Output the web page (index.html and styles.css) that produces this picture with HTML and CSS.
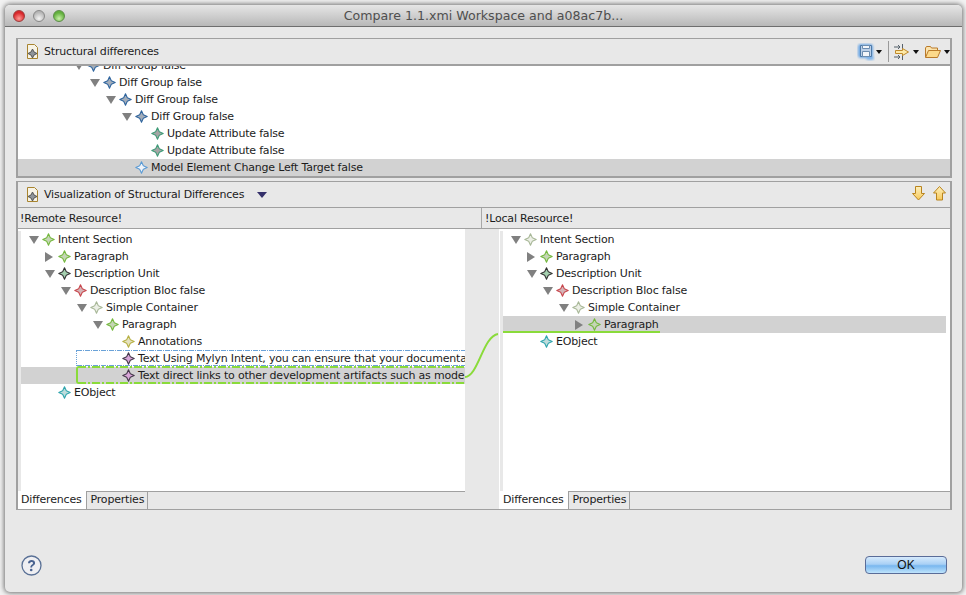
FILE: index.html
```html
<!DOCTYPE html>
<html lang="en">
<head>
<meta charset="utf-8">
<title>Compare</title>
<link rel="stylesheet" href="styles.css">
</head>
<body>
<svg class="defs" width="0" height="0">
  <defs>
    <filter id="glow" x="-20%" y="-20%" width="140%" height="140%"><feGaussianBlur stdDeviation="0.8"/></filter>
    <linearGradient id="ga" x1="0" y1="0" x2="0" y2="1"><stop offset="0" stop-color="#fdf0bd"/><stop offset="1" stop-color="#f7c95a"/></linearGradient>
  </defs>
  <symbol id="star" viewBox="0 0 13 13">
    <path d="M6.500 .8 8.300 4.700 12.200 6.500 8.300 8.300 6.500 12.200 4.700 8.300 .8 6.500 4.700 4.700z" fill="var(--c)" stroke="currentColor" stroke-width="1.100" stroke-linejoin="round"/>
    <path d="M6.500 4 9 6.500 6.500 9 4 6.500z" fill="var(--c)"/>
  </symbol>
  <symbol id="doc" viewBox="0 0 13 16">
    <path d="M1.500 .5h7l3 3v11h-10z" fill="#f7f3e6" stroke="#a8842f"/>
    <path d="M6.500 5 8 8l3 1.500L8 11l-1.500 3L5 11 2 9.500 5 8z" fill="#8f9499" stroke="#555"/>
  </symbol>
</svg>
<div class="window">
  <header class="titlebar">
    <div class="lights"><i class="light l-red"></i><i class="light l-grey"></i><i class="light l-green"></i></div>
    <div class="title">Compare 1.1.xmi Workspace and a08ac7b...</div>
  </header>
  <main class="body">
    <section class="panel top">
      <div class="head">
        <svg class="docicon"><use href="#doc"/></svg>
        <span class="head-title">Structural differences</span>
        <div class="tools">
          <svg class="tool save" width="18" height="18" viewBox="0 0 18 18"><g filter="url(#glow)"><rect x="1" y="1" width="15" height="14" rx="3" fill="#6fa8e4"/><rect x="9" y="13" width="8" height="4" rx="2" fill="#7fb4ea"/></g><path d="M3.500 2.500h11v11h-11z" fill="#bcd0e8" stroke="#4e7aa8"/><path d="M5.500 2.500h7v3h-7zM5.500 8.500h7v5h-7z" fill="#f3f6fa" stroke="#6d8db0"/></svg>
          <i class="drop d1"></i>
          <i class="sep"></i>
          <svg class="tool" width="16" height="16" viewBox="0 0 16 16"><path d="M0 3h6M4 1l2 2-2 2M8.500 0v6M0 13h6M4 11l2 2-2 2M8.500 10v6" fill="none" stroke="#55606a"/><path d="M1.500 6.500h7V4.500L14.500 8l-6 3.500v-2h-7z" fill="#fde9a8" stroke="#c08a2a"/></svg>
          <i class="drop d2"></i>
          <svg class="tool folder" width="16" height="12" viewBox="0 0 16 12"><path d="M.5 11V2l1-1.500h4l1 1.500h6v2" fill="#fbe3ad" stroke="#b97a2a"/><path d="M.5 11.500l3-7h12l-3 7z" fill="#fcd98a" stroke="#b97a2a"/></svg>
          <i class="drop d3"></i>
        </div>
      </div>
      <div class="tree tree-top">
        <div class="row l3 clip-first"><i class="tw down"></i><svg class="star blue"><use href="#star"/></svg><span>Diff Group false</span></div>
        <div class="row l4"><i class="tw down"></i><svg class="star blue"><use href="#star"/></svg><span>Diff Group false</span></div>
        <div class="row l5"><i class="tw down"></i><svg class="star blue"><use href="#star"/></svg><span>Diff Group false</span></div>
        <div class="row l6"><i class="tw down"></i><svg class="star blue"><use href="#star"/></svg><span>Diff Group false</span></div>
        <div class="row l7"><i class="tw"></i><svg class="star teal-g"><use href="#star"/></svg><span>Update Attribute false</span></div>
        <div class="row l7"><i class="tw"></i><svg class="star teal-g"><use href="#star"/></svg><span>Update Attribute false</span></div>
        <div class="row l6 sel"><i class="tw"></i><svg class="star sky"><use href="#star"/></svg><span>Model Element Change Left Target false</span></div>
      </div>
    </section>
    <section class="panel bottom">
      <div class="head">
        <svg class="docicon"><use href="#doc"/></svg>
        <span class="head-title">Visualization of Structural Differences</span>
        <i class="navy-drop"></i>
        <div class="tools arrows">
          <svg width="13" height="15" viewBox="0 0 13 15"><path d="M3.500.5h6v7h3L6.500 14 .5 7.500h3z" fill="url(#ga)" stroke="#b9841f"/></svg>
          <svg width="13" height="15" viewBox="0 0 13 15"><path d="M6.500.5l6 6.500h-3v7h-6V7h-3z" fill="url(#ga)" stroke="#b9841f"/></svg>
        </div>
      </div>
      <div class="cols">
        <div class="col col-left">!Remote Resource!</div>
        <div class="col col-right">!Local Resource!</div>
      </div>
      <div class="compare">
        <div class="pane pane-left">
          <div class="tree">
            <div class="row l0"><i class="tw down"></i><svg class="star green"><use href="#star"/></svg><span>Intent Section</span></div>
            <div class="row l1"><i class="tw right"></i><svg class="star green"><use href="#star"/></svg><span>Paragraph</span></div>
            <div class="row l1"><i class="tw down"></i><svg class="star dark"><use href="#star"/></svg><span>Description Unit</span></div>
            <div class="row l2"><i class="tw down"></i><svg class="star red"><use href="#star"/></svg><span>Description Bloc false</span></div>
            <div class="row l3"><i class="tw down"></i><svg class="star pale"><use href="#star"/></svg><span>Simple Container</span></div>
            <div class="row l4"><i class="tw down"></i><svg class="star green"><use href="#star"/></svg><span>Paragraph</span></div>
            <div class="row l5"><i class="tw"></i><svg class="star yellow"><use href="#star"/></svg><span>Annotations</span></div>
            <div class="row l5 box-blue"><i class="tw"></i><svg class="star pink"><use href="#star"/></svg><span>Text Using Mylyn Intent, you can ensure that your documentation stays up to date</span></div>
            <div class="row l5 sel box-green"><i class="tw"></i><svg class="star pink"><use href="#star"/></svg><span>Text direct links to other development artifacts such as model elements and code</span></div>
            <div class="row l1"><i class="tw"></i><svg class="star teal"><use href="#star"/></svg><span>EObject</span></div>
          </div>
          <div class="tabs">
            <div class="tab active">Differences</div>
            <div class="tab">Properties</div>
          </div>
        </div>
        <div class="gutter">
          <svg width="34" height="50" viewBox="0 0 34 50"><path d="M0 47C13 47 18 6 33 4" fill="none" stroke="#8adb3a" stroke-width="2"/></svg>
        </div>
        <div class="pane pane-right">
          <div class="tree">
            <div class="row l0"><i class="tw down"></i><svg class="star pale"><use href="#star"/></svg><span>Intent Section</span></div>
            <div class="row l1"><i class="tw right"></i><svg class="star green"><use href="#star"/></svg><span>Paragraph</span></div>
            <div class="row l1"><i class="tw down"></i><svg class="star dark"><use href="#star"/></svg><span>Description Unit</span></div>
            <div class="row l2"><i class="tw down"></i><svg class="star red"><use href="#star"/></svg><span>Description Bloc false</span></div>
            <div class="row l3"><i class="tw down"></i><svg class="star pale"><use href="#star"/></svg><span>Simple Container</span></div>
            <div class="row l4 sel line-green"><i class="tw right"></i><svg class="star green"><use href="#star"/></svg><span>Paragraph</span></div>
            <div class="row l1"><i class="tw"></i><svg class="star teal"><use href="#star"/></svg><span>EObject</span></div>
          </div>
          <div class="tabs">
            <div class="tab active">Differences</div>
            <div class="tab">Properties</div>
          </div>
        </div>
      </div>
    </section>
    <footer class="foot">
      <svg class="help" width="21" height="21" viewBox="0 0 21 21"><circle cx="10.500" cy="10.500" r="9.500" fill="#efeff2" stroke="#5a7196" stroke-width="1.300"/><path d="M7 8.300c0-2 1.600-3.200 3.600-3.200s3.500 1.100 3.500 3c0 2.500-3 2.400-3 4.500H9.300c0-3 2.700-3 2.700-4.400 0-.8-.6-1.300-1.400-1.300-.9 0-1.500.6-1.600 1.400z" fill="#4a6390"/><circle cx="10.200" cy="15" r="1.300" fill="#4a6390"/></svg>
      <button class="ok">OK</button>
    </footer>
  </main>
</div>
</body>
</html>
```
FILE: styles.css
```css
* { box-sizing: border-box; }
html, body { margin: 0; height: 100%; }
body {
  width: 966px; height: 595px; overflow: hidden;
  background: #f2f2f2;
  padding: 5px 4px 3px 5px;
  font: 11px/17px "DejaVu Sans", sans-serif;
  letter-spacing: -0.19px;
  color: #1c1c1c;
}
.defs { position: absolute; }
.window {
  height: 587px;
  display: flex; flex-direction: column;
  background: #e8e8e8;
  border-radius: 5px;
  box-shadow: 0 0 5px 1px rgba(0,0,0,.55);
  overflow: hidden;
}
.titlebar {
  height: 22px; flex: none;
  display: flex; align-items: center; position: relative;
  background: linear-gradient(#e6e6e6, #b8b8b8);
  border-bottom: 1px solid #6e6e6e;
}
.lights { display: flex; gap: 8px; padding-left: 8px; }
.light { width: 12px; height: 12px; border-radius: 50%; border: 1px solid #888; }
.l-red { background: radial-gradient(circle at 50% 75%, #ff9a94, #d8262a 65%); border-color: #9c3c3c; }
.l-grey { background: radial-gradient(circle at 50% 75%, #f4f4f4, #b5b5b5 70%); }
.l-green { background: radial-gradient(circle at 50% 75%, #c8f0a8, #62b03c 65%); border-color: #5c8c48; }
.title {
  position: absolute; left: 0; right: 0; top: 2px; text-align: center;
  font-size: 12.600px; letter-spacing: 0; color: #4f4f4f;
}
.body { flex: 1; display: flex; flex-direction: column; padding: 11px 10px 0 11px; min-height: 0; }
.panel { border: 1px solid #a0a0a0; border-width: 1px 2px 2px 2px; background: #e8e8e8; }
.panel.top { height: 140px; flex: none; }
.panel.bottom { height: 329px; margin-top: 3px; flex: none; }
.head {
  height: 27px; display: flex; align-items: center;
  border-bottom: 2px solid #a0a0a0; padding-left: 8px;
}
.bottom .head { height: 26px; border-bottom-width: 1px; }
.docicon { width: 13px; height: 16px; margin-right: 5px; flex: none; }
.head-title { line-height: 17px; }
.navy-drop {
  width: 0; height: 0; margin-left: 13px;
  border: 5px solid transparent; border-top: 6px solid #34306a; border-bottom: 0;
}
.tools { margin-left: auto; display: flex; align-items: center; height: 22px; }
.tool { flex: none; }
.drop { width: 0; height: 0; border: 3px solid transparent; border-top: 4px solid #111; border-bottom: 0; margin-left: 3px; }
.d1 { margin-left: 1px; }
.sep { width: 1px; height: 21px; background: #9a9a9a; margin: 0 5px 0 6px; }
.folder { margin-left: 6px; }
.arrows { gap: 8px; padding-right: 4px; margin-bottom: 2px; }
.tree { background: #fff; overflow: hidden; }
.tree-top { height: 110px; }
.row { height: 17px; display: flex; align-items: center; white-space: nowrap; position: relative; }
.clip-first { margin-top: -9px; }
.l0 { padding-left: 8px; }
.l1 { padding-left: 24px; }
.l2 { padding-left: 40px; }
.l3 { padding-left: 56px; }
.l4 { padding-left: 72px; }
.l5 { padding-left: 88px; }
.l6 { padding-left: 104px; }
.l7 { padding-left: 120px; }
.tw { width: 10px; height: 8px; flex: none; margin-right: 3px; }
.tw.down { border: 5px solid transparent; border-top: 8px solid #808080; border-bottom: 0; }
.tw.right { width: 8px; height: 10px; margin-right: 5px; border: 5px solid transparent; border-left: 8px solid #808080; border-right: 0; }
.star { width: 13px; height: 13px; flex: none; margin-right: 3px; }
.row span { line-height: 17px; }
.sel { background: #d2d2d2; }
.blue { color: #2f659e; --c: #a4aeba; }
.sky { color: #5b9bd5; --c: #f0f4fa; }
.teal-g { color: #3f9c78; --c: #a5a5a5; }
.green { color: #74b83e; --c: #c5d5b5; }
.dark { color: #333; --c: #a5d0b0; }
.red { color: #c8474d; --c: #d5b5b8; }
.pale { color: #a8b898; --c: #ecefe6; }
.yellow { color: #b7b044; --c: #e5e2c0; }
.pink { color: #44384a; --c: #d8a6d8; }
.teal { color: #2fa5ad; --c: #bfdcdc; }
.cols { display: flex; height: 21px; border-bottom: 1px solid #a0a0a0; }
.col { line-height: 21px; }
.col-left { width: 464px; padding-left: 2px; border-right: 1px solid #a8a8a8; }
.col-right { flex: 1; padding-left: 3px; }
.compare { display: flex; height: 280px; }
.pane { display: flex; flex-direction: column; background: #fff; padding-top: 2px; }
.pane .tree { flex: 1; border-left: 3px solid #e8e8e8; }
.pane-left { width: 447px; }
.pane-right { width: 451px; padding-right: 4px; }
.pane-right .tree { margin-left: 1px; }
.gutter { width: 34px; flex: none; background: #e8e8e8; padding-top: 101px; }
.gutter svg { display: block; }
.tabs { height: 18px; flex: none; display: flex; background: #e8e8e8; border-top: 1px solid #a0a0a0; }
.pane-right .tabs { margin-right: -4px; }
.tab { height: 17px; line-height: 16px; padding: 0 3px 0 4px; border-right: 1px solid #a0a0a0; }
.tab.active { background: #fff; height: 18px; margin-top: -1px; line-height: 18px; padding: 0 4px 0 3px; }
.pane-right .tab.active { padding: 0 4px; }
.box-blue::after, .box-green::after {
  content: ""; position: absolute; left: 55px; right: -6px;
  background-repeat: no-repeat;
}
.box-blue::after {
  top: 0; bottom: 1px;
  border-left: 1px dotted #6aa2d8;
  background-image:
    repeating-linear-gradient(90deg, #6aa2d8 0 5px, transparent 5px 6px, #6aa2d8 6px 7px, transparent 7px 8px),
    repeating-linear-gradient(90deg, #6aa2d8 0 5px, transparent 5px 6px, #6aa2d8 6px 7px, transparent 7px 8px);
  background-size: 100% 1px, 100% 1px;
  background-position: left top, left bottom;
}
.box-green::after {
  top: -1px; bottom: 0;
  border-radius: 3px 0 0 3px;
  border-left: 2px solid #8adb3a;
  background-image:
    repeating-linear-gradient(90deg, #8adb3a 0 8px, transparent 8px 10px, #8adb3a 10px 12px, transparent 12px 14px),
    repeating-linear-gradient(90deg, #8adb3a 0 8px, transparent 8px 10px, #8adb3a 10px 12px, transparent 12px 14px);
  background-size: 100% 2px, 100% 2px;
  background-position: left top, left bottom;
}
.line-green::after {
  content: ""; position: absolute; left: 0; width: 157px; bottom: 0; height: 2px; background: #8adb3a;
}
.foot { flex: 1; display: flex; align-items: flex-start; justify-content: space-between; padding: 45px 5px 0 5px; }
.help { display: block; }
.ok {
  width: 82px; height: 18px; padding: 0; margin-top: 1px;
  border: 1px solid #5a6c98; border-radius: 4px;
  background: linear-gradient(#d6eafc 0%, #a9d0f5 45%, #79b7ef 55%, #bfe4fc 100%);
  font: 12px/16px "Liberation Sans", sans-serif; color: #111;
}
```
